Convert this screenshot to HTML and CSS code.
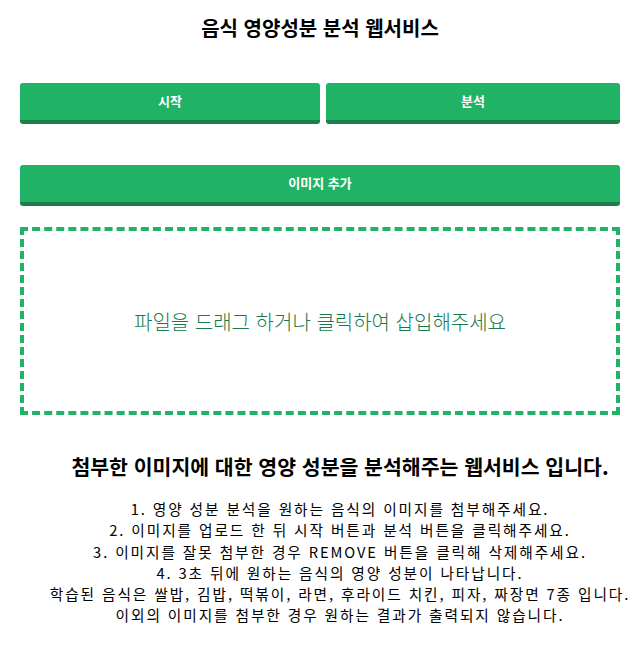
FILE: index.html
```html
<!DOCTYPE html>
<html lang="ko">
<head>
<meta charset="utf-8">
<title>음식 영양성분 분석 웹서비스</title>
<link rel="stylesheet" href="styles.css">
</head>
<body>
<div class="page">
  <h1 class="title">음식 영양성분 분석 웹서비스</h1>
  <div class="btn-row">
    <button class="btn">시작</button>
    <button class="btn">분석</button>
  </div>
  <button class="btn btn-wide">이미지 추가</button>
  <div class="dropzone">
    <span class="drop-text">파일을 드래그 하거나 클릭하여 삽입해주세요</span>
  </div>
  <div class="info">
    <h2 class="info-title">첨부한 이미지에 대한 영양 성분을 분석해주는 웹서비스 입니다.</h2>
    <p class="info-text">1. 영양 성분 분석을 원하는 음식의 이미지를 첨부해주세요.<br>
    2. 이미지를 업로드 한 뒤 시작 버튼과 분석 버튼을 클릭해주세요.<br>
    3. 이미지를 잘못 첨부한 경우 REMOVE 버튼을 클릭해 삭제해주세요.<br>
    4. 3초 뒤에 원하는 음식의 영양 성분이 나타납니다.<br>
    학습된 음식은 쌀밥, 김밥, 떡볶이, 라면, 후라이드 치킨, 피자, 짜장면 7종 입니다.<br>
    이외의 이미지를 첨부한 경우 원하는 결과가 출력되지 않습니다.</p>
  </div>
</div>
</body>
</html>
```

FILE: styles.css
```css
html, body {
  margin: 0;
  padding: 0;
  background: #ffffff;
}
body {
  font-family: "Noto Sans CJK KR", "Noto Sans", sans-serif;
  color: #000;
}
.page {
  padding: 0 20px;
}
.title {
  margin: 0;
  padding-top: 14px;
  height: 65px;
  box-sizing: border-box;
  text-align: center;
  font-size: 20px;
  line-height: 28px;
  font-weight: 700;
}
.btn-row {
  display: grid;
  grid-template-columns: 300px 294px;
  column-gap: 6px;
  margin-top: 18px;
}
.btn {
  display: block;
  height: 41px;
  border: none;
  border-bottom: 4px solid #1a7f4b;
  border-radius: 3px;
  background: #21b365;
  color: #fff;
  font-family: "Noto Sans CJK KR", "Noto Sans", sans-serif;
  font-size: 13px;
  font-weight: 700;
  padding: 0 0 2px;
  margin: 0;
  cursor: pointer;
}
.btn-wide {
  width: 600px;
  margin-top: 41px;
}
.dropzone {
  margin-top: 21px;
  height: 188px;
  box-sizing: border-box;
  border: 4px dashed #21b365;
  display: flex;
  align-items: center;
  justify-content: center;
}
.drop-text {
  color: #177a4b;
  font-size: 20px;
  font-weight: 300;
  padding-top: 0;
}
.info {
  margin: 0 -12px 0 28px;
  text-align: center;
}
.info-title {
  margin: 0;
  padding-top: 37px;
  font-size: 20.5px;
  line-height: 28px;
  font-weight: 700;
}
.info-text {
  margin: 18px 0 0;
  font-size: 14.7px;
  letter-spacing: 1.9px;
  line-height: 21.3px;
  font-weight: 400;
}
```
